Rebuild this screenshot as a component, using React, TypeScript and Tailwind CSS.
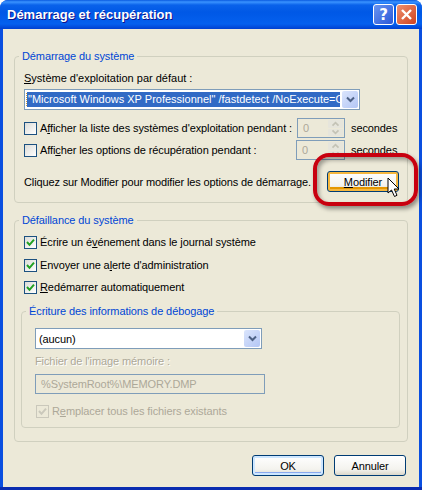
import type { ReactNode } from 'react';

const UI_FONT = "font-['Liberation_Sans',Arial,sans-serif] text-[11px] leading-[14px] tracking-[-0.1px] text-black";

function Chevron({ color = '#4d6185' }: { color?: string }) {
  return (
    <svg width="9" height="7" viewBox="0 0 9 7" fill="none">
      <path d="M1 1.5 L4.5 5 L8 1.5" stroke={color} strokeWidth="2" />
    </svg>
  );
}

function Combo({ className, children }: { className: string; children: ReactNode }) {
  return (
    <div className={`flex items-center h-[21px] bg-white border border-[#7f9db9] p-[1px] ${className}`}>
      <div className="flex-1 min-w-0 overflow-hidden whitespace-nowrap">{children}</div>
      <div className="ml-[2px] flex items-center justify-center w-[16px] h-full rounded-[2px] bg-[linear-gradient(135deg,#dbe5fc,#b3c6f5)]">
        <Chevron />
      </div>
    </div>
  );
}

function Check({ checked, disabled }: { checked?: boolean; disabled?: boolean }) {
  const box = disabled
    ? 'border-[#cac8bb] bg-[#ece9d8]'
    : 'border-[#1c5180] bg-[linear-gradient(135deg,#dcdcd7,#ffffff)]';
  return (
    <span className={`flex items-center justify-center shrink-0 w-[13px] h-[13px] border ${box}`}>
      {checked && (
        <svg width="9" height="9" viewBox="0 0 9 9" fill="none">
          <path d="M1 4 L3.5 6.8 L8 1.6" stroke={disabled ? '#cac8bb' : '#21a121'} strokeWidth="2" />
        </svg>
      )}
    </span>
  );
}

function Spin({ className }: { className: string }) {
  return (
    <div className={`flex h-[20px] shrink-0 bg-[#ece9d8] border border-[#7f9db9] p-[1px] ${className}`}>
      <span className="flex-1 pl-[4px] pt-[1px] text-[#aca899]">0</span>
      <div className="flex flex-col gap-[1px] w-[15px]">
        <div className="flex-1 flex items-center justify-center bg-[#e6e5dc] rounded-[1px]">
          <svg className="rotate-180" width="9" height="6" viewBox="0 0 9 7" fill="none">
            <path d="M1 1.5 L4.5 5 L8 1.5" stroke="#c4c3b6" strokeWidth="2" />
          </svg>
        </div>
        <div className="flex-1 flex items-center justify-center bg-[#e6e5dc] rounded-[1px]">
          <svg width="9" height="6" viewBox="0 0 9 7" fill="none">
            <path d="M1 1.5 L4.5 5 L8 1.5" stroke="#c4c3b6" strokeWidth="2" />
          </svg>
        </div>
      </div>
    </div>
  );
}

function Legend({ className, children }: { className: string; children: ReactNode }) {
  return <legend className={`px-[3px] text-[#0046d5] ${className}`}>{children}</legend>;
}

function CheckRow({ className, children }: { className: string; children: ReactNode }) {
  return (
    <div className={`flex items-center gap-[3px] h-[14px] ${className}`}>
      <Check checked />
      <span>{children}</span>
    </div>
  );
}

function XpButton({ className = '', children }: { className?: string; children: ReactNode }) {
  return (
    <button className={`w-[72px] h-[21px] shrink-0 rounded-[3px] border border-[#003c74] bg-[linear-gradient(180deg,#ffffff,#f4f3ee_70%,#dcd8ca)] ${className}`}>
      {children}
    </button>
  );
}

export default function App() {
  return (
    <div className={`relative w-[422px] h-[490px] overflow-hidden bg-white ${UI_FONT}`}>
      <div className="flex flex-col h-full rounded-t-[8px] bg-[#0a4fe0] border-b-[3px] border-[#0a2cb0] overflow-hidden">
        <div className="flex items-center justify-between h-[29px] shrink-0 pl-[7px] pr-[5px] bg-[linear-gradient(180deg,#0a5ae0_0,#3a93ff_2px,#0a62ea_5px,#0058e6_12px,#0460ee_24px,#0040d0_29px)]">
          <span className="font-['Liberation_Sans',sans-serif] font-bold text-[13px] text-white tracking-[0px] [text-shadow:1px_1px_0_#0f1089]">
            Démarrage et récupération
          </span>
          <div className="flex gap-[2px]">
            <div className="flex items-center justify-center w-[21px] h-[21px] rounded-[3px] border border-white bg-[linear-gradient(135deg,#6a95f0,#2a58d8)] text-white font-bold text-[15px] font-['DejaVu_Sans',sans-serif]">
              ?
            </div>
            <div className="flex items-center justify-center w-[21px] h-[21px] rounded-[3px] border border-white bg-[linear-gradient(135deg,#ee9070,#d0431f)]">
              <svg width="13" height="13" viewBox="0 0 13 13" fill="none">
                <path d="M2 2 L11 11 M11 2 L2 11" stroke="#fff" strokeWidth="2.4" />
              </svg>
            </div>
          </div>
        </div>

        <div className="flex-1 mx-[3px] bg-[#ece9d8] pt-[20px] px-[11px]">
          <fieldset className="min-w-0 border border-[#d0d0bf] rounded-[4px] px-[9px] pb-[10px]">
            <Legend className="ml-[-5px]">Démarrage du système</Legend>
            <div className="mt-[8px] tracking-[0px]">
              <u>S</u>ystème d'exploitation par défaut :
            </div>
            <Combo className="mt-[4px] w-[336px]">
              <div className="h-[15px] ml-[1px] bg-[#316ac5] text-white leading-[15px] tracking-[0px] pl-[1px] outline-dotted outline-1 outline-[#ce9c3a] overflow-hidden">
                "Microsoft Windows XP Professionnel" /fastdetect /NoExecute=O
              </div>
            </Combo>
            <div className="flex items-center h-[20px] mt-[8px]">
              <Check />
              <span className="ml-[3px] flex-1 min-w-0 whitespace-nowrap">
                A<u>f</u>ficher la liste des systèmes d'exploitation pendant :
              </span>
              <Spin className="w-[48px]" />
              <span className="ml-[6px] w-[47px]">secondes</span>
            </div>
            <div className="flex items-center h-[20px] mt-[2px]">
              <Check />
              <span className="ml-[3px] flex-1 min-w-0 whitespace-nowrap">
                Affi<u>c</u>her les options de récupération pendant :
              </span>
              <Spin className="w-[49px]" />
              <span className="ml-[6px] w-[47px]">secondes</span>
            </div>
            <div className="flex items-center justify-between h-[21px] mt-[11px]">
              <span className="whitespace-nowrap tracking-[-0.13px]">Cliquez sur Modifier pour modifier les options de démarrage.</span>
              <XpButton className="mr-[-1px] shadow-[inset_0_0_0_2px_#f5b73f,inset_0_-2px_0_2px_#e59700]">
                <u>M</u>odifier
              </XpButton>
            </div>
          </fieldset>

          <fieldset className="min-w-0 mt-[10px] border border-[#d0d0bf] rounded-[4px] pl-[6px] pr-[7px] pb-[13px]">
            <Legend className="ml-[-2px]">Défaillance du système</Legend>
            <CheckRow className="mt-[8px] ml-[3px]">
              Écrire un é<u>v</u>énement dans le journal système
            </CheckRow>
            <CheckRow className="mt-[9px] ml-[3px]">
              Envoyer une a<u>l</u>erte d'administration
            </CheckRow>
            <CheckRow className="mt-[8px] ml-[3px]">
              <u>R</u>edémarrer automatiquement
            </CheckRow>

            <fieldset className="min-w-0 mt-[10px] border border-[#d0d0bf] rounded-[4px] px-[13px] pb-[9px]">
              <Legend className="ml-[-9px]">Écriture des informations de débogage</Legend>
              <Combo className="mt-[10px] w-[227px]">
                <span className="pl-[2px]">(aucun)</span>
              </Combo>
              <div className="mt-[5px] text-[#aca899] [text-shadow:1px_1px_0_#ffffff]">
                Fichier de l'image mémoire :
              </div>
              <div className="mt-[6px] flex items-center h-[20px] w-[230px] border border-[#7f9db9] pl-[5px] text-[#aca899]">
                %SystemRoot%\MEMORY.DMP
              </div>
              <div className="mt-[10px] ml-[1px] flex items-center gap-[3px] h-[14px] text-[#aca899]">
                <Check checked disabled />
                <span>
                  R<u>e</u>mplacer tous les fichiers existants
                </span>
              </div>
            </fieldset>
          </fieldset>

          <div className="flex justify-end gap-[10px] mt-[13px] pr-[2px]">
            <XpButton className="shadow-[inset_0_0_0_2px_#cee7ff,inset_-1px_-2px_0_1px_#8aa9ee]">OK</XpButton>
            <XpButton>Annuler</XpButton>
          </div>
        </div>
      </div>

      {/* red highlight ring and mouse pointer lie over the dialog */}
      <div className="absolute left-[313px] top-[153px] w-[105px] h-[53px] rounded-[16px] border-[4px] border-[#c8000f] shadow-[2px_3px_4px_rgba(0,0,0,0.4),inset_2px_3px_4px_rgba(0,0,0,0.35)] pointer-events-none" />
      <svg className="absolute left-[387px] top-[177px]" width="13" height="21" viewBox="0 0 13 21">
        <path d="M1 1 L1 16 L4.5 13 L7.5 19.5 L10 18.3 L7.2 12 L12 12 Z" fill="#fff" stroke="#000" strokeWidth="1" />
      </svg>
    </div>
  );
}
